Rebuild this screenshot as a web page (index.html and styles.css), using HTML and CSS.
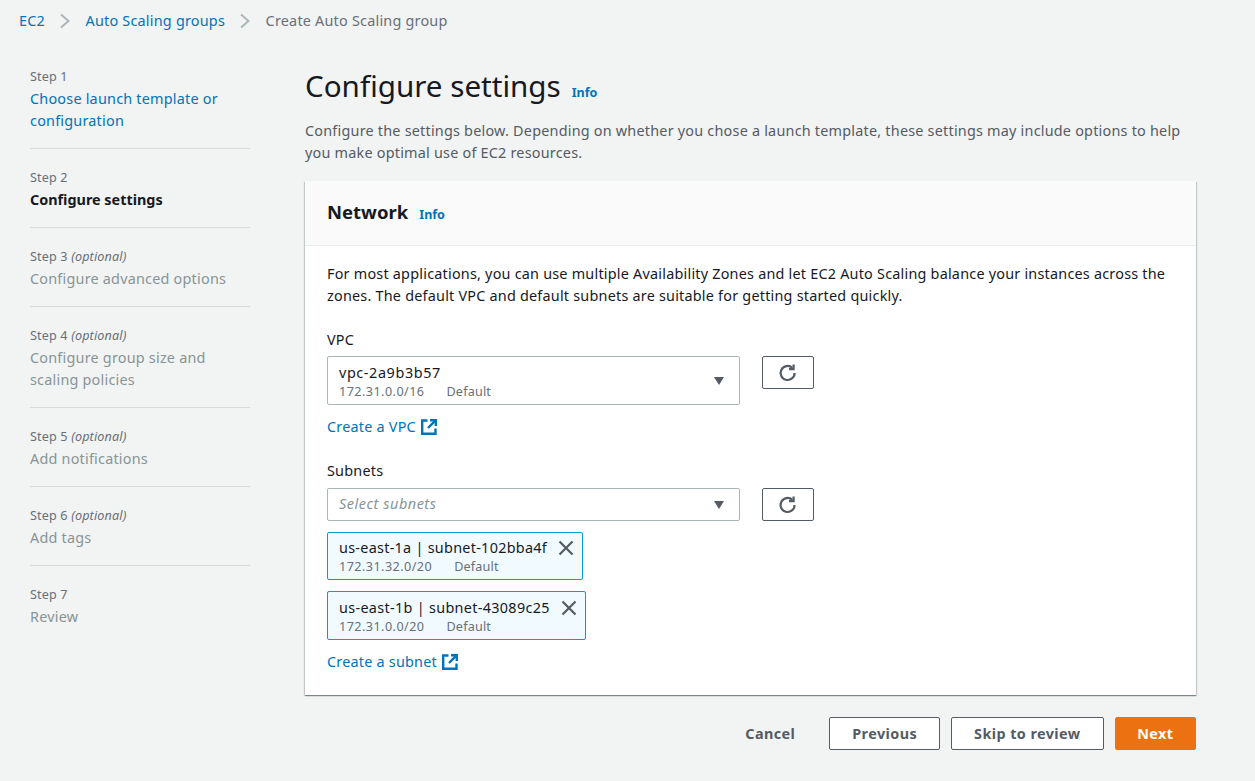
FILE: index.html
```html
<!DOCTYPE html>
<html lang="en">
<head>
<meta charset="utf-8">
<title>Create Auto Scaling group</title>
<link rel="stylesheet" href="styles.css">
</head>
<body>
<nav class="crumbs">
  <a href="#">EC2</a>
  <svg class="crumb-sep" viewBox="0 0 12 16"><path d="M2 1.5 9.5 8 2 14.5"/></svg>
  <a href="#">Auto Scaling groups</a>
  <svg class="crumb-sep" viewBox="0 0 12 16"><path d="M2 1.5 9.5 8 2 14.5"/></svg>
  <span>Create Auto Scaling group</span>
</nav>
<div class="layout">
  <ol class="steps">
    <li class="step"><div class="step-label">Step 1</div><a class="step-title link" href="#">Choose launch template or configuration</a></li>
    <li class="step"><div class="step-label">Step 2</div><div class="step-title active">Configure settings</div></li>
    <li class="step"><div class="step-label">Step 3 <i>(optional)</i></div><div class="step-title">Configure advanced options</div></li>
    <li class="step"><div class="step-label">Step 4 <i>(optional)</i></div><div class="step-title">Configure group size and scaling policies</div></li>
    <li class="step"><div class="step-label">Step 5 <i>(optional)</i></div><div class="step-title">Add notifications</div></li>
    <li class="step"><div class="step-label">Step 6 <i>(optional)</i></div><div class="step-title">Add tags</div></li>
    <li class="step"><div class="step-label">Step 7</div><div class="step-title">Review</div></li>
  </ol>
  <main class="main">
    <div class="page-head"><h1>Configure settings</h1><a class="info" href="#">Info</a></div>
    <p class="page-desc">Configure the settings below. Depending on whether you chose a launch template, these settings may include options to help you make optimal use of EC2 resources.</p>
    <section class="card">
      <header class="card-head"><h2>Network</h2><a class="info" href="#">Info</a></header>
      <div class="card-body">
        <p class="intro">For most applications, you can use multiple Availability Zones and let EC2 Auto Scaling balance your instances across the zones. The default VPC and default subnets are suitable for getting started quickly.</p>
        <label class="field-label vpc-label">VPC</label>
        <div class="select-row">
          <div class="select tall">
            <div>
              <div class="opt-main">vpc-2a9b3b57</div>
              <div class="opt-sub"><span class="cidr">172.31.0.0/16</span><span>Default</span></div>
            </div>
            <span class="caret"></span>
          </div>
          <button class="refresh" type="button"><svg viewBox="0 0 20 20"><path d="M16.6 9.9a7 7 0 1 1-2.3-5.1"/><path d="M15.6 1.6v4.6H11"/></svg></button>
        </div>
        <a class="ext-link" href="#">Create a VPC<svg viewBox="0 0 16 16"><path d="M6.5 1.5H1.2v13.3H14.5V9.5"/><path d="M9 1.2H14.8V7"/><path d="M14.3 1.7 7 9"/></svg></a>
        <label class="field-label subnets-label">Subnets</label>
        <div class="select-row">
          <div class="select">
            <span class="placeholder">Select subnets</span>
            <span class="caret"></span>
          </div>
          <button class="refresh" type="button"><svg viewBox="0 0 20 20"><path d="M16.6 9.9a7 7 0 1 1-2.3-5.1"/><path d="M15.6 1.6v4.6H11"/></svg></button>
        </div>
        <div class="chips">
          <div class="chip">
            <div>
              <div class="opt-main">us-east-1a | subnet-102bba4f</div>
              <div class="opt-sub"><span class="cidr">172.31.32.0/20</span><span>Default</span></div>
            </div>
            <svg class="chip-x" viewBox="0 0 16 16"><path d="M1.5 1.5 14.5 14.5M14.5 1.5 1.5 14.5"/></svg>
          </div>
          <div class="chip">
            <div>
              <div class="opt-main">us-east-1b | subnet-43089c25</div>
              <div class="opt-sub"><span class="cidr">172.31.0.0/20</span><span>Default</span></div>
            </div>
            <svg class="chip-x" viewBox="0 0 16 16"><path d="M1.5 1.5 14.5 14.5M14.5 1.5 1.5 14.5"/></svg>
          </div>
        </div>
        <a class="ext-link" href="#">Create a subnet<svg viewBox="0 0 16 16"><path d="M6.5 1.5H1.2v13.3H14.5V9.5"/><path d="M9 1.2H14.8V7"/><path d="M14.3 1.7 7 9"/></svg></a>
      </div>
    </section>
    <footer class="actions">
      <button class="btn plain" type="button">Cancel</button>
      <button class="btn" type="button">Previous</button>
      <button class="btn" type="button">Skip to review</button>
      <button class="btn primary" type="button">Next</button>
    </footer>
  </main>
</div>
</body>
</html>
```
FILE: styles.css
```css
* { box-sizing: border-box; }
html, body { height: 100%; }
body {
  margin: 0;
  background: #f2f3f3;
  color: #16191f;
  font-family: "Noto Sans", sans-serif;
  font-size: 14.4px;
  letter-spacing: .22px;
  line-height: 22px;
  overflow: hidden;
}
a { color: #0073bb; text-decoration: none; }

.crumbs {
  display: flex;
  align-items: center;
  height: 22px;
  margin: 10px 0 0 19px;
  color: #687078;
}
.crumb-sep {
  width: 12px;
  height: 16px;
  margin: 0 15px 0 13.5px;
  fill: none;
  stroke: #aab7b8;
  stroke-width: 2;
}

.layout {
  display: flex;
  padding: 35px 59px 0 30px;
}
.steps {
  list-style: none;
  width: 220px;
  margin: 0 55px 0 0;
  padding: 0;
  flex: none;
}
.step {
  padding: 20px 0 16px;
  border-bottom: 1px solid #d5dbdb;
}
.step:first-child { padding-top: 1px; }
.step:last-child { border-bottom: 0; }
.step-label {
  font-size: 12.6px;
  letter-spacing: .15px;
  line-height: 18px;
  margin-bottom: 2px;
  color: #687078;
}
.step-title { display: block; color: #879596; }
.step-title.link { color: #0073bb; }
.step-title.active { color: #16191f; font-weight: 700; letter-spacing: 0; }

.main { flex: 1; min-width: 0; }
.page-head {
  display: flex;
  align-items: baseline;
  gap: 11px;
  margin-top: -1px;
}
h1 {
  margin: 0;
  font-size: 29.6px;
  letter-spacing: 0;
  line-height: 40px;
  font-weight: 400;
}
.info { font-size: 12.5px; letter-spacing: 0; font-weight: 700; line-height: 16px; }
.page-desc {
  margin: 14px 0 17px;
  color: #545b64;
}
.card {
  background: #fff;
  box-shadow: 0 1px 1px 0 rgba(0,28,36,.3), 1px 1px 1px 0 rgba(0,28,36,.15), -1px 1px 1px 0 rgba(0,28,36,.15);
}
.card-head {
  display: flex;
  align-items: baseline;
  gap: 11px;
  height: 65px;
  padding: 19px 22px 0;
  background: #fafafa;
  border-bottom: 1px solid #eaeded;
}
h2 { margin: 0; font-size: 18.5px; letter-spacing: 0; line-height: 24px; font-weight: 700; }
.card-body { padding: 17px 22px 22px; }
.intro { margin: 0; color: #16191f; }
.field-label { display: block; }
.vpc-label { margin-top: 22px; margin-bottom: 5px; }
.subnets-label { margin-top: 22px; margin-bottom: 6px; }
.select-row { display: flex; align-items: flex-start; gap: 22px; }
.select {
  width: 413px;
  height: 33px;
  display: flex;
  align-items: center;
  justify-content: space-between;
  padding: 0 15px 0 11px;
  background: #fff;
  border: 1px solid #aab7b8;
  border-radius: 2px;
}
.select.tall { height: 49px; }
.select.tall .opt-main { letter-spacing: .6px; }
.opt-main { line-height: 22px; }
.opt-sub {
  display: flex;
  gap: 22px;
  font-size: 12.6px;
  letter-spacing: .18px;
  line-height: 16px;
  color: #687078;
}
.cidr { letter-spacing: .45px; }
.placeholder { color: #879596; font-style: italic; letter-spacing: .55px; margin-top: -2px; }
.caret {
  width: 0;
  height: 0;
  border-left: 5.5px solid transparent;
  border-right: 5.5px solid transparent;
  border-top: 8px solid #545b64;
}
.refresh {
  width: 52px;
  height: 33px;
  padding: 0;
  display: flex;
  align-items: center;
  justify-content: center;
  background: #fff;
  border: 1px solid #545b64;
  border-radius: 2px;
}
.refresh svg {
  width: 20px;
  height: 20px;
  fill: none;
  stroke: #545b64;
  stroke-width: 2.2;
}
.ext-link {
  display: inline-flex;
  align-items: center;
  gap: 5.5px;
  margin-top: 11px;
  vertical-align: top;
}
.ext-link svg {
  width: 16px;
  height: 16px;
  fill: none;
  stroke: #0073bb;
  stroke-width: 2.4;
}
.chips {
  display: flex;
  flex-direction: column;
  align-items: flex-start;
  gap: 11px;
  margin-top: 11px;
}
.chip {
  display: flex;
  align-items: flex-start;
  gap: 11px;
  height: 48px;
  padding: 4px 8px 0 11px;
  background: #f1faff;
  border: 1px solid #00a1c9;
  border-radius: 2px;
}
.chip .opt-main { letter-spacing: .28px; }
.chip + .chip { height: 49px; padding-top: 5px; }
.chip + .chip .opt-main { letter-spacing: .32px; }
.chip-x {
  width: 16px;
  height: 16px;
  margin-top: 3px;
  fill: none;
  stroke: #545b64;
  stroke-width: 2.2;
}
.actions {
  display: flex;
  justify-content: flex-end;
  gap: 11px;
  margin-top: 22px;
}
.btn {
  height: 33px;
  padding: 0 22px;
  font-family: inherit;
  font-size: 14.4px;
  font-weight: 700;
  letter-spacing: .42px;
  color: #545b64;
  background: #fff;
  border: 1px solid #545b64;
  border-radius: 2px;
}
.btn.plain { background: none; border-color: transparent; }
.btn.primary { background: #ec7211; border-color: #ec7211; color: #fff; padding: 0 21.6px; }
```
